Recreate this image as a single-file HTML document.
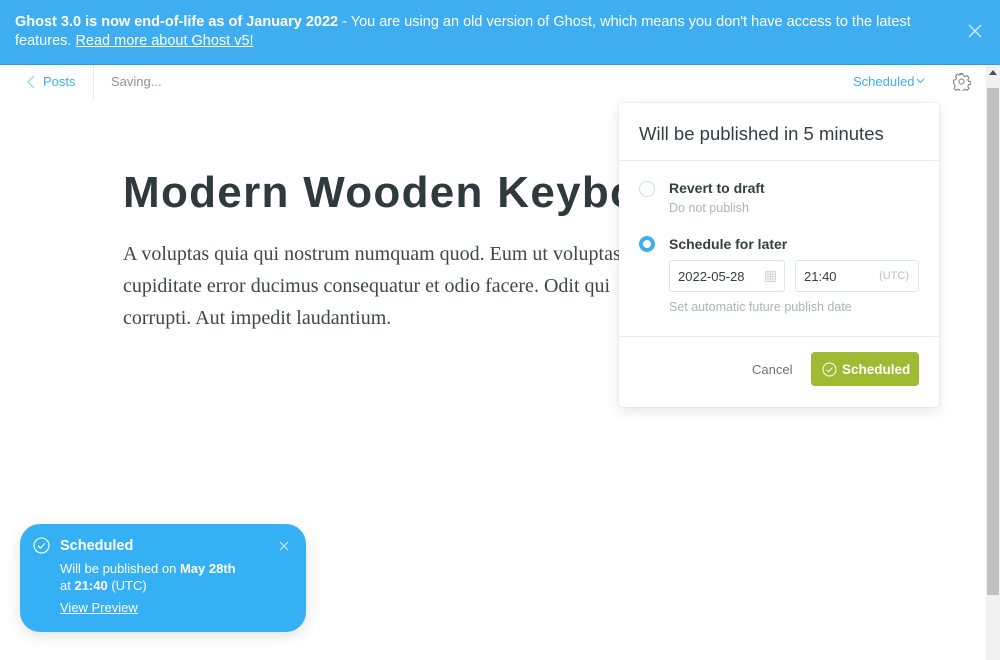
<!DOCTYPE html>
<html><head><meta charset="utf-8"><style>
*{box-sizing:border-box;margin:0;padding:0}
body{width:1000px;height:660px;overflow:hidden;background:#fff;font-family:"Liberation Sans","DejaVu Sans",sans-serif;position:relative;color:#343f44}
.banner{position:absolute;left:0;top:0;width:1000px;height:65px;background:#3eaef0;border-bottom:1px solid #2a9de0;color:#fff;font-size:14.5px;line-height:19px;padding:13px 60px 13px 15px}
.banner a{color:#fff;text-decoration:underline}
.x{position:absolute;right:18px;top:24px;width:14px;height:14px}
.nav{position:absolute;top:65px;left:0;width:986px;height:35px}
.posts{position:absolute;left:27px;top:9px;color:#3eaef0;font-size:13px}
.sep{position:absolute;left:93px;top:0;width:1px;height:35px;background:#e5eaed}
.saving{position:absolute;left:111px;top:9px;color:#8a949a;font-size:13px}
.sched{position:absolute;left:853px;top:9px;color:#3eaef0;font-size:13px}
h1{position:absolute;left:123px;top:168px;font-size:44px;font-weight:bold;color:#2f3a3f;white-space:nowrap;letter-spacing:1.3px}
.body{position:absolute;left:123px;top:238px;width:540px;font-family:"Liberation Serif",serif;font-size:20px;line-height:32px;color:#3c484e}
.sb{position:absolute;left:986px;top:65px;width:14px;height:595px;background:#f1f1f1}
.thumb{position:absolute;left:987px;top:88px;width:12px;height:507px;background:#c1c1c1}
.pop{position:absolute;left:619px;top:103px;width:320px;height:304px;background:#fff;border-radius:4px;box-shadow:0 0 0 1px rgba(0,0,0,.04),0 4px 14px rgba(0,0,0,.1)}
.pop h2{position:absolute;left:20px;top:20px;font-size:18.5px;font-weight:normal;color:#343f44}
.hr{position:absolute;left:0;width:320px;height:1px;background:#e3ecf2}
.radio{position:absolute;left:20px;width:16px;height:16px;border-radius:50%;border:1px solid #cfdde6}
.radio.on{border:4px solid #3eaef0;background:#fff}
.lbl{position:absolute;left:50px;font-size:14px;font-weight:bold;color:#343f44}
.sub{position:absolute;left:50px;font-size:12.5px;color:#a9b5bc}
.inp{position:absolute;top:157px;height:32px;border:1px solid #dde5ea;border-radius:3px;font-size:13px;color:#343f44;padding:8px 8px}
.btn{position:absolute;left:192px;top:249px;width:108px;height:34px;background:#9fbb34;border-radius:4px;color:#fff;font-weight:bold;font-size:13.5px;padding:10px 0 0 31px}
.toast{position:absolute;left:20px;top:524px;width:286px;height:108px;background:#35b0f5;border-radius:20px;color:#fff;box-shadow:0 4px 14px rgba(0,0,0,.12)}
</style></head><body>
<div class="banner"><b>Ghost 3.0 is now end-of-life as of January 2022</b> - You are using an old version of Ghost, which means you don't have access to the latest features. <a>Read more about Ghost v5!</a>
<svg class="x" viewBox="0 0 14 14"><path d="M1 1L13 13M13 1L1 13" stroke="#cfeafb" stroke-width="1.5"/></svg></div>
<div class="nav">
<svg style="position:absolute;left:27px;top:10px" width="8" height="14" viewBox="0 0 8 14"><path d="M7 1L1 7L7 13" fill="none" stroke="#8fcdf5" stroke-width="1.2"/></svg>
<div class="posts" style="left:43px">Posts</div><div class="sep"></div><div class="saving">Saving...</div>
<div class="sched">Scheduled<svg width="9" height="6" style="margin-left:2px;vertical-align:2px" viewBox="0 0 9 6"><path d="M1 1L4.5 4.5L8 1" fill="none" stroke="#3eaef0"/></svg></div>
<svg style="position:absolute;left:952px;top:7px" width="19" height="19" viewBox="0 0 24 24" fill="none" stroke="#7d878c" stroke-width="1.4"><circle cx="12" cy="12" r="3.2"/><path d="M10.3 2h3.4l.6 2.8 2 1 2.6-1.3 2.4 2.4-1.3 2.6.9 2 2.8.6v3.4l-2.8.6-.9 2 1.3 2.6-2.4 2.4-2.6-1.3-2 .9-.6 2.8h-3.4l-.6-2.8-2-.9-2.6 1.3-2.4-2.4 1.3-2.6-.9-2L2 13.7v-3.4l2.8-.6.9-2-1.3-2.6 2.4-2.4 2.6 1.3 2-1z"/></svg>
</div>
<h1>Modern Wooden Keyboard</h1>
<div class="body">A voluptas quia qui nostrum numquam quod. Eum ut voluptas cupiditate error ducimus consequatur et odio facere. Odit qui corrupti. Aut impedit laudantium.</div>
<div class="sb"></div><div class="thumb"></div>
<svg style="position:absolute;left:989px;top:70px" width="8" height="5" viewBox="0 0 8 5"><path d="M0 5L4 0L8 5z" fill="#505050"/></svg>
<div class="pop">
<h2>Will be published in 5 minutes</h2>
<div class="hr" style="top:57px"></div>
<div class="radio" style="top:78px"></div>
<div class="lbl" style="top:77px">Revert to draft</div>
<div class="sub" style="top:98px">Do not publish</div>
<div class="radio on" style="top:133px"></div>
<div class="lbl" style="top:133px">Schedule for later</div>
<div class="inp" style="left:50px;width:116px">2022-05-28<svg style="position:absolute;right:8px;top:9px" width="11" height="12" viewBox="0 0 11 12"><path d="M0.5 1.5h10v10h-10zM0.5 4h10M0.5 6.5h10M0.5 9h10M3 1.5v10M5.5 1.5v10M8 1.5v10" fill="none" stroke="#c7d0d5" stroke-width="0.8"/></svg></div>
<div class="inp" style="left:176px;width:124px">21:40<span style="position:absolute;right:9px;top:9px;font-size:11px;color:#b5c0c6">(UTC)</span></div>
<div class="sub" style="top:197px">Set automatic future publish date</div>
<div class="hr" style="top:233px"></div>
<div style="position:absolute;left:133px;top:259px;font-size:13px;color:#6a767c">Cancel</div>
<div class="btn"><svg style="position:absolute;left:11px;top:10px" width="15" height="15" viewBox="0 0 15 15" fill="none" stroke="#fff" stroke-width="1"><circle cx="7.5" cy="7.5" r="6.5"/><path d="M4.5 7.7l2 2 4-4.2"/></svg>Scheduled</div>
</div>
<div class="toast">
<svg style="position:absolute;left:13px;top:13px" width="17" height="17" viewBox="0 0 17 17" fill="none" stroke="#fff" stroke-width="1.1"><circle cx="8.5" cy="8.5" r="7.5"/><path d="M5 8.7l2.5 2.5 4.5-5"/></svg>
<div style="position:absolute;left:40px;top:14px;font-weight:bold;font-size:14.5px">Scheduled</div>
<svg style="position:absolute;left:259px;top:17px" width="10" height="10" viewBox="0 0 10 10"><path d="M1 1L9 9M9 1L1 9" stroke="#d3edfd" stroke-width="1.1"/></svg>
<div style="position:absolute;left:40px;top:36px;font-size:13px;line-height:17px">Will be published on <b>May 28th</b><br>at <b>21:40</b> (UTC)</div>
<div style="position:absolute;left:40px;top:76px;font-size:13px;text-decoration:underline">View Preview</div>
</div>
</body></html>
